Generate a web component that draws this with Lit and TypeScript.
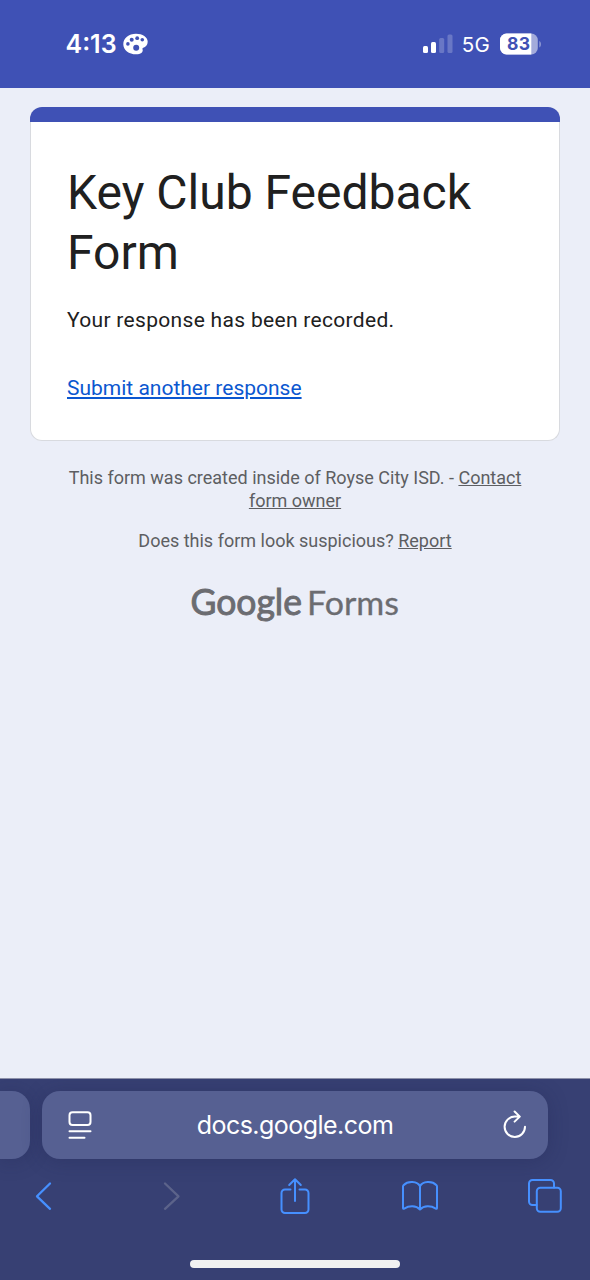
import { LitElement, html, css } from "lit";
import { customElement } from "lit/decorators.js";

@customElement("status-bar")
class StatusBar extends LitElement {
  static styles = css`
    :host {
      display: flex;
      box-sizing: border-box;
      height: 88px;
      padding: 0 48px 0 65.5px;
      justify-content: space-between;
      align-items: center;
      background: #3f51b5;
      color: #fff;
      font-family: Inter, "Liberation Sans", sans-serif;
    }
    .group { display: flex; align-items: center; height: 30px; }
    .time { width: 51.5px; font-size: 25px; font-weight: 600; letter-spacing: 0; line-height: 30px; }
    .palette { margin-left: 6px; }
    .net { margin: 2px 10px 0 9px; font-size: 20.5px; font-weight: 400; line-height: 28px; letter-spacing: 0.2px; }
    svg { display: block; }
    .num { font: 700 17.5px Inter, "Liberation Sans", sans-serif; }
  `;
  render() {
    return html`
      <div class="group">
        <span class="time">4:13</span>
        <svg class="palette" width="25" height="22" viewBox="0 0 25 22">
          <path fill="#fff" d="M13 .7C19.500 .7 24.700 4 24.700 8.700c0 3.500-2.200 5.300-4.400 6-.9.300-1 .9-.7 1.700C20.500 19 17.500 21.300 13.200 21.300 5.800 21.300 .3 17 .3 11.200.3 5.200 5.800.7 13 .7z"/>
          <g fill="#3f51b5">
            <circle cx="4.900" cy="10.900" r="1.800"/><circle cx="8.700" cy="6.800" r="2"/>
            <circle cx="14.200" cy="5.200" r="1.900"/><circle cx="19.300" cy="6.800" r="1.800"/>
            <circle cx="13.200" cy="14.700" r="3"/>
          </g>
        </svg>
      </div>
      <div class="group">
        <svg width="30" height="20" viewBox="0 0 30 20" fill="#fff">
          <rect x="0" y="12" width="5" height="7" rx="1.500"/>
          <rect x="8" y="8" width="5" height="11" rx="1.500"/>
          <g opacity=".22"><rect x="16.200" y="4" width="5" height="15" rx="1.500"/><rect x="24.500" y="0.500" width="5" height="18.500" rx="1.500"/></g>
        </svg>
        <span class="net">5G</span>
        <svg width="42" height="22" viewBox="0 0 42 22">
          <defs><clipPath id="cell"><rect y=".5" width="37.800" height="21" rx="6.500"/></clipPath></defs>
          <g clip-path="url(#cell)"><rect width="38" height="22" fill="#a3abdb"/><rect width="31.300" height="22" fill="#fff"/></g>
          <path d="M39.300 8v6.500c2.200-1 2.200-5.500 0-6.500z" fill="#8f99d3"/>
          <text class="num" x="7" y="17.200" fill="#3f51b5" textLength="23">83</text>
        </svg>
      </div>
    `;
  }
}

@customElement("form-page")
class FormPage extends LitElement {
  static styles = css`
    :host {
      display: block;
      flex: 1;
      padding: 19px 30px 0;
      background: #ebeef8;
      font-family: Roboto, "Liberation Sans", sans-serif;
      color: #202020;
    }
    .card {
      box-sizing: border-box;
      height: 334px;
      border-radius: 12px;
      border: 1px solid #d8dadf;
      border-top: 0;
      background: #fff;
    }
    .stripe { height: 15px; margin: 0 -1px; border-radius: 12px 12px 0 0; background: #3f51b5; }
    .body { padding: 41px 36px 0; }
    h1 { margin: 0; font-size: 48px; font-weight: 400; line-height: 60px; }
    p { margin: 0; }
    .msg { margin-top: 22px; font-size: 21px; line-height: 30px; letter-spacing: 0.31px; }
    .again { margin-top: 38px; font-size: 21px; line-height: 30px; color: #0b57d0; letter-spacing: 0; }
    a { color: inherit; text-decoration: underline; }
    .foot { text-align: center; font-size: 18px; line-height: 22.5px; color: #5d5e62; }
    .owner { margin: 26px 30px 0; }
    .report { margin-top: 18px; }
    .logo { display: block; margin: 28px auto 0; overflow: visible; }
    .g { font: 400 36.5px Lato, sans-serif; stroke: #6b6c71; stroke-width: 0.95px; }
    .f { font: 400 32.5px Lato, sans-serif; stroke: #6b6c71; stroke-width: 0.3px; }
  `;
  render() {
    return html`
      <div class="card">
        <div class="stripe"></div>
        <div class="body">
          <h1>Key Club Feedback Form</h1>
          <p class="msg">Your response has been recorded.</p>
          <p class="again"><a>Submit another response</a></p>
        </div>
      </div>
      <p class="foot owner">This form was created inside of Royse City ISD. - <a>Contact form owner</a></p>
      <p class="foot report">Does this form look suspicious? <a>Report</a></p>
      <svg class="logo" width="220" height="52" viewBox="0 0 220 52" fill="#6b6c71">
        <text class="g" x="5.500" y="34" textLength="111.500" lengthAdjust="spacingAndGlyphs">Google</text>
        <text class="f" x="122" y="34" textLength="92" lengthAdjust="spacingAndGlyphs">Forms</text>
      </svg>
    `;
  }
}

@customElement("browser-bar")
class BrowserBar extends LitElement {
  static styles = css`
    :host {
      display: flex;
      flex-direction: column;
      box-sizing: border-box;
      height: 202px;
      padding-top: 12px;
      background: #374073;
      border-top: 1px solid #8d91aa;
      overflow: hidden;
    }
    .tabs { display: flex; gap: 12px; height: 67.5px; }
    .tab { background: #566092; border-radius: 18px; box-shadow: 0 2px 20px rgba(30, 34, 80, 0.3); }
    .prev { width: 30px; border-radius: 0 18px 18px 0; }
    .current {
      box-sizing: border-box;
      width: 506px;
      padding: 0 20px 0 25px;
      display: flex;
      align-items: center;
      justify-content: space-between;
    }
    .url { margin-right: 5px; color: #fff; font: 400 25px/30px Inter, "Liberation Sans", sans-serif; letter-spacing: -0.53px; }
    .tools {
      display: grid;
      grid-template-columns: repeat(5, 125.5px);
      justify-content: center;
      justify-items: center;
      align-items: center;
      height: 40px;
      margin: 17px 2px 0 0;
      color: #4690ff;
    }
    .dim { color: #5c638a; padding-left: 7px; }
    .share { padding-left: 2px; }
    svg { display: block; fill: none; stroke: currentColor; stroke-width: 2; stroke-linecap: round; stroke-linejoin: round; }
    .chevron { stroke-width: 2.3; }
    .white { color: #fff; }
    .home { width: 210px; height: 8px; border-radius: 4px; background: #f1f1f1; margin: 44.500px auto 0; }
  `;
  render() {
    return html`
      <div class="tabs">
        <div class="tab prev"></div>
        <div class="tab current">
          <svg class="white" width="26" height="30" viewBox="0 0 26 30">
            <rect x="2.500" y="2.200" width="21" height="12.800" rx="3"/><path d="M2.500 21.300h21M2.500 27.800h15"/>
          </svg>
          <span class="url">docs.google.com</span>
          <svg class="white" width="26" height="30" viewBox="0 0 26 30">
            <path d="M23 16.800A10.200 10.200 0 1 1 12.800 6.600h4.700M12.600 1.500l5.200 5.100-5.200 5"/>
          </svg>
        </div>
      </div>
      <div class="tools">
        <svg class="chevron" width="18" height="30" viewBox="0 0 18 30"><path d="M16 2.500 3 15.300l13 12.500"/></svg>
        <svg class="dim chevron" width="18" height="30" viewBox="0 0 18 30"><path d="M2 2.500 15.500 15.300 2 27.800"/></svg>
        <svg class="share" width="30" height="38" viewBox="0 0 30 38">
          <path d="M10.500 12.500H5a3.500 3.500 0 0 0-3.500 3.500v16.500A3.500 3.500 0 0 0 5 36h20a3.500 3.500 0 0 0 3.500-3.500V16a3.500 3.500 0 0 0-3.500-3.500h-5.500M15 24V2.200M9.200 8 15 2.200 20.800 8"/>
        </svg>
        <svg width="38" height="32" viewBox="0 0 38 32">
          <path d="M19 6.300C16.500 1.200 7 .5 2.500 5.200 2 5.700 2 6 2 6.500V28c0 .8.500 1 1.200.6C8 25.500 15 25.200 19 29.500c4-4.300 11-4 15.800-.9.700.4 1.200.2 1.200-.6V6.500c0-.5 0-.8-.5-1.300C31 .5 21.500 1.200 19 6.300zv23"/>
        </svg>
        <svg width="36" height="36" viewBox="0 0 36 36">
          <path d="M9.500 27H5.500A3.500 3.500 0 0 1 2 23.500v-18A3.500 3.500 0 0 1 5.500 2h18A3.500 3.500 0 0 1 27 5.500v4"/><rect x="9.800" y="9.800" width="24" height="24" rx="3.500"/>
        </svg>
      </div>
      <div class="home"></div>
    `;
  }
}

@customElement("app-root")
class AppRoot extends LitElement {
  static styles = css`
    :host { display: flex; flex-direction: column; height: 1280px; width: 590px; overflow: hidden; }
  `;
  render() {
    return html`<status-bar></status-bar><form-page></form-page><browser-bar></browser-bar>`;
  }
}
